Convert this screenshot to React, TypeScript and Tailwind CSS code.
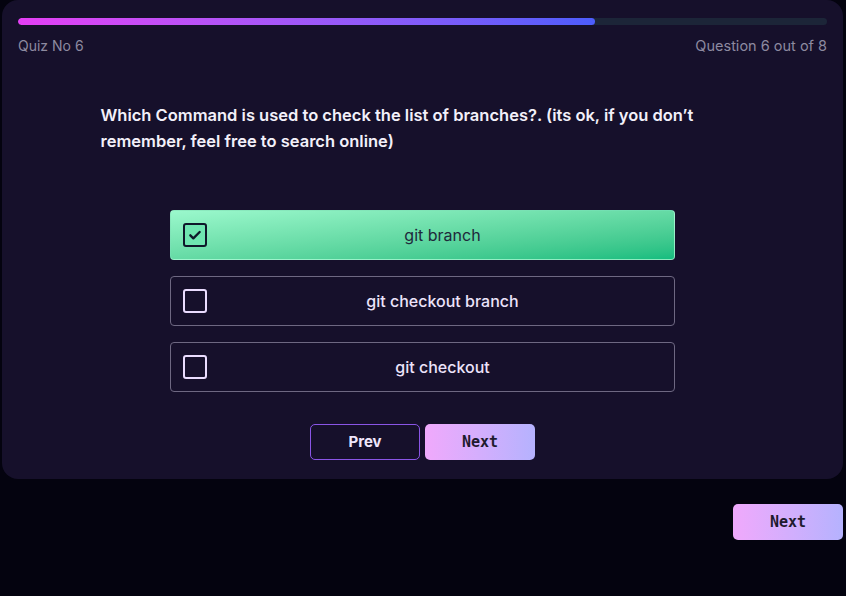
const options = ["git branch", "git checkout branch", "git checkout"];

function CheckBox({ checked }: { checked: boolean }) {
  if (checked) {
    return (
      <div className="w-6 h-6 shrink-0 rounded-[3px] border-2 border-[#0f172a] bg-[#6fe6b1] flex items-center justify-center">
        <svg viewBox="0 0 24 24" className="w-4 h-4" fill="none" stroke="#0f172a" strokeWidth="3.5" strokeLinecap="round" strokeLinejoin="round">
          <path d="M5 12.5l4.5 4.5L19 7.5" />
        </svg>
      </div>
    );
  }
  return <div className="w-6 h-6 shrink-0 rounded-[3px] border-2 border-[#eadcff]" />;
}

export default function App() {
  const selected = 0;
  return (
    <div className="min-h-[596px] bg-[#04030f] pl-[2px] pr-[3px] font-['Inter',sans-serif]">
      {/* Quiz card */}
      <div className="bg-[#16102b] rounded-2xl px-4 pt-[18px] pb-5 h-[479px]">
        <div className="h-[7px] rounded-full bg-[#1c2538] overflow-hidden">
          <div className="h-full w-[577px] rounded-full bg-gradient-to-r from-[#e43ef4] to-[#4c5dfc]" />
        </div>
        <div className="flex justify-between mt-[10px] text-[14px] text-[#8d8aa0]">
          <span>Quiz No 6</span>
          <span className="text-[14.5px]">Question 6 out of 8</span>
        </div>

        <p className="w-[644px] mx-auto mt-[45px] pr-[12px] text-[16.5px] font-semibold leading-[26px] text-[#f3f0fa]">
          Which Command is used to check the list of branches?. (its ok, if you don’t remember, feel free to search online)
        </p>

        <div className="w-[505px] mx-auto mt-[56px] flex flex-col gap-4">
          {options.map((o, i) => (
            <div
              key={o}
              className={
                i === selected
                  ? "h-[50px] rounded-[4px] flex items-center gap-3 pl-3 pr-2 bg-gradient-to-br from-[#9af8cc] to-[#12bd7f] border border-[#a7f3d0]/60"
                  : "h-[50px] rounded-[4px] flex items-center gap-3 pl-3 pr-2 border border-[#6e6882]"
              }
            >
              <CheckBox checked={i === selected} />
              <span
                className={
                  i === selected
                    ? "flex-1 text-center text-[16px] text-[#1e293b]"
                    : "flex-1 text-center text-[16px] font-medium text-[#ece3fa]"
                }
              >
                {o}
              </span>
            </div>
          ))}
        </div>

        <div className="flex justify-center gap-[5px] mt-8">
          <button className="w-[110px] h-9 rounded-[5px] border border-[#8a55e6] text-[#efe6fb] text-[15px] font-bold">
            Prev
          </button>
          <button className="w-[110px] h-9 rounded-[5px] bg-gradient-to-r from-[#f0a9fc] to-[#b5b2fe] text-[#1e1b2e] text-[15px] font-bold font-['DejaVu_Sans_Mono',monospace]">
            Next
          </button>
        </div>
      </div>

      <div className="flex justify-end mt-[25px]">
        <button className="w-[110px] h-9 rounded-[5px] bg-gradient-to-r from-[#f0a9fc] to-[#b5b2fe] text-[#1e1b2e] text-[15px] font-bold font-['DejaVu_Sans_Mono',monospace]">
          Next
        </button>
      </div>
    </div>
  );
}
